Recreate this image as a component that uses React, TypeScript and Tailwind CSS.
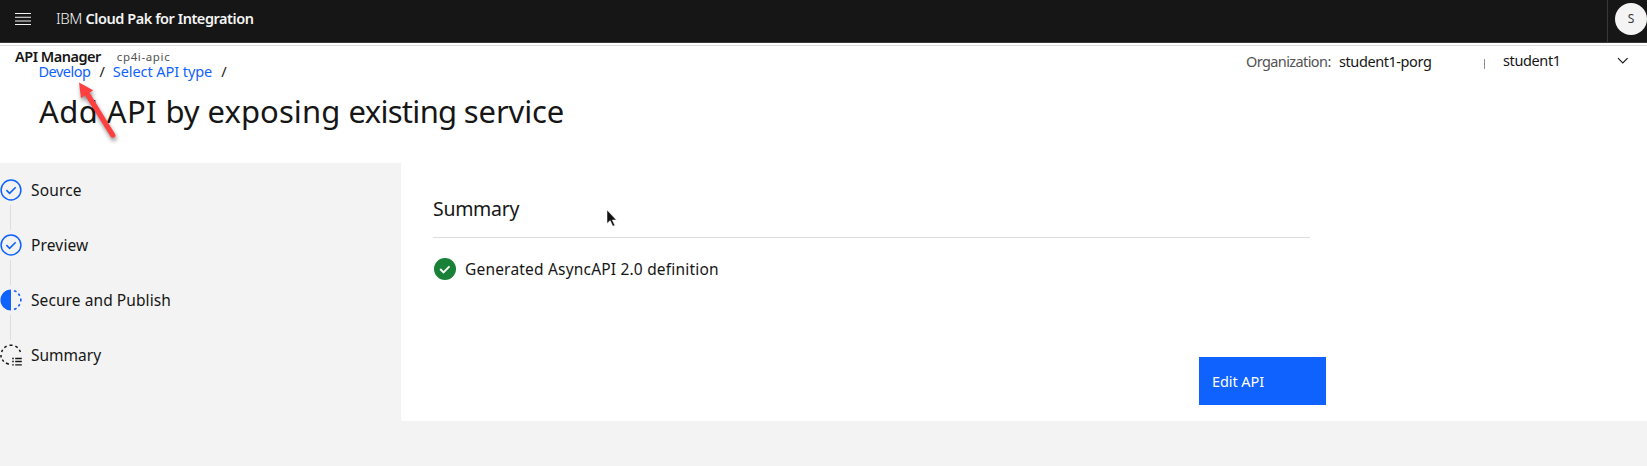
import type { ReactNode } from "react";

function CheckOutline() {
  return (
    <svg width="22" height="22" viewBox="0 0 22 22" fill="none" stroke="#0f62fe" strokeWidth="1.5" className="block">
      <circle cx="11" cy="11" r="9.9" />
      <path d="M6.4 11.1l3.2 3.2 6.1-6.1" strokeWidth="1.6" />
    </svg>
  );
}

function HalfCircle() {
  return (
    <svg width="22" height="22" viewBox="0 0 22 22" fill="none" className="block">
      <path d="M11 .4a10.6 10.6 0 0 0 0 21.2z" fill="#0f62fe" />
      <path
        d="M14 1.6l2.5 1.2M18.4 4.6l1.4 2.2M20.8 9.5v3M19.8 15.3l-1.4 2.1M16.6 19.2l-2.6 1.2"
        stroke="#0f62fe"
        strokeWidth="1.6"
      />
    </svg>
  );
}

function DashedList() {
  return (
    <svg width="22" height="22" viewBox="0 0 22 22" fill="none" stroke="#161616" strokeWidth="1.5" className="block">
      <path d="M9.5 1.2h3M15.4 2.2l2.3 1.4M19.4 5.7l1 2.3M6.6 2.2L4.3 3.6M2.6 5.7l-1 2.3M1 11v2.4M2.3 15.6l1.5 2M5.9 19l3 1.2" />
      <path d="M12.2 14.5h1.6M12.2 17.5h1.6M12.2 20.9h1.6M15.2 14.5h6.6M15.2 17.5h6.6M15.2 20.9h6.6" strokeWidth="1.3" />
    </svg>
  );
}

function Step({ icon, last, children }: { icon: ReactNode; last?: boolean; children: ReactNode }) {
  return (
    <li className="flex h-[55px] items-start">
      <div className="flex w-[22px] shrink-0 flex-col items-center">
        {icon}
        {!last && <div className="mt-1 mr-px h-[25px] w-px bg-[#dcdcdc]" />}
      </div>
      <span className="ml-[9px] text-[15.5px] leading-[22px]">{children}</span>
    </li>
  );
}

export default function App() {
  return (
    <div className="relative h-[466px] w-full overflow-hidden bg-[#f3f3f3] font-['Noto_Sans','Open_Sans',sans-serif] text-[#161616]">
      <header className="flex h-[43px] items-start justify-between border-b border-[#393939] bg-[#161616] text-[#f4f4f4]">
        <div className="flex pt-3 pl-[15px]">
          <svg width="16" height="14" viewBox="0 0 16 14" className="mt-px block" fill="#f4f4f4">
            <path d="M0 0h16v1H0zM0 3.7h16v1H0zM0 7.4h16v1H0zM0 11h16v1H0z" />
          </svg>
          <div className="-mt-[5px] ml-[25px] flex text-[15px] leading-[22px] whitespace-pre">
            <span className="font-light tracking-[-0.4px]">IBM </span>
            <span className="text-[14.5px] font-semibold tracking-[-0.45px]">Cloud Pak for Integration</span>
          </div>
        </div>
        <div className="flex h-[42px] w-10 border-l border-[#393939] pt-[3px] pl-[7px]">
          <div className="flex size-8 shrink-0 items-center justify-center rounded-full bg-[#f4f4f4] text-xs text-[#393939]">S</div>
        </div>
      </header>

      <section className="flex h-[120px] justify-between bg-white">
        <div className="flex-1">
          <div className="h-[3px] border-b border-[#dedede]" />
          <div className="mt-[3px] flex h-[15px] items-center pl-[15px]">
            <span className="text-[14.5px] leading-[15px] font-semibold tracking-[-0.5px]">API Manager</span>
            <span className="ml-4 text-[11.5px] leading-[15px] tracking-[0.62px] text-[#525252]">cp4i-apic</span>
          </div>
          <nav className="flex h-[15px] pl-[38.5px] text-[14.5px] leading-[15px]">
            <a className="tracking-[-0.5px] text-[#0f62fe]">Develop</a>
            <span className="ml-[9px]">/</span>
            <a className="ml-[8px] tracking-[-0.08px] text-[#0f62fe]">Select API type</a>
            <span className="ml-[9px]">/</span>
          </nav>
          <h1 className="mt-3 pl-[39px] text-[31px] leading-10 font-normal tracking-[-0.13px]">
            <span className="tracking-[0.42px]">Add API </span>
            <span>by </span>
            <span className="tracking-[0.1px]">exposing </span>
            <span className="tracking-[-0.7px]">existing </span>
            service
          </h1>
        </div>
        <div className="w-[401px]">
          <div className="h-[3px] border-b border-[#dedede]" />
          <div className="mt-[5px] flex text-[14.5px] leading-5">
            <span className="w-[93px] tracking-[-0.6px] text-[#525252]">Organization:</span>
            <span className="w-[145px] tracking-[-0.42px]">student1-porg</span>
            <span className="mt-2 h-2.5 w-px bg-[#8d8d8d]" />
            <span className="-mt-px ml-[18px] w-[114px] tracking-[-0.38px]">student1</span>
            <svg width="12" height="8" viewBox="0 0 12 8" fill="none" stroke="#161616" strokeWidth="1.1" className="mt-1.5">
              <path d="M1 1.2l4.8 4.8 4.8-4.8" />
            </svg>
          </div>
        </div>
      </section>

      <div className="flex">
        <aside className="w-[401px] shrink-0 pt-4">
          <ol>
            <Step icon={<CheckOutline />}>
              <span className="tracking-[0.15px]">Source</span>
            </Step>
            <Step icon={<CheckOutline />}>
              <span className="tracking-[0.15px]">Preview</span>
            </Step>
            <Step icon={<HalfCircle />}>
              <span className="tracking-[0.08px]">Secure and Publish</span>
            </Step>
            <Step icon={<DashedList />} last>
              Summary
            </Step>
          </ol>
        </aside>
        <main className="h-[258px] flex-1 bg-white pl-8">
          <div className="h-[75px] w-[877px] border-b border-[#dedede] pt-8">
            <h2 className="text-[19.5px] leading-7 font-normal tracking-[-0.3px]">Summary</h2>
          </div>
          <div className="mt-5 flex items-center">
            <svg width="24" height="22" viewBox="0 0 24 22" fill="none">
              <circle cx="12" cy="11" r="11" fill="#198038" />
              <path d="M7.2 11l3.3 3.3 6-6" stroke="#fff" strokeWidth="1.9" />
            </svg>
            <span className="ml-2 text-[15.5px] leading-[22px] tracking-[0.19px]">Generated AsyncAPI 2.0 definition</span>
          </div>
          <div className="mt-[77px] flex w-[893px] justify-end">
            <button className="h-12 w-[127px] bg-[#0f62fe] pl-[13px] text-left text-[14.5px] leading-5 tracking-[-0.08px] text-white">Edit API</button>
          </div>
        </main>
      </div>

      <svg width="50" height="70" viewBox="0 0 50 70" className="absolute top-[78px] left-[72px] drop-shadow-[1px_3px_2px_rgba(0,0,0,0.45)]">
        <path d="M7 4.5L21.2 12.2L17.6 14.8L43.2 56.2Q44.2 58.5 42 59.5Q40 60.5 38.7 58.8L13 17.6L9 20.2Z" fill="#ff4040" />
      </svg>
      <svg width="14" height="20" viewBox="0 0 14 20" className="absolute top-[209px] left-[606px]">
        <path d="M1 1v13.4l3.2-2.8 2.6 5.6 2-1-2.5-5.2h4.1z" fill="#111" stroke="#fff" strokeWidth=".5" />
      </svg>
    </div>
  );
}
